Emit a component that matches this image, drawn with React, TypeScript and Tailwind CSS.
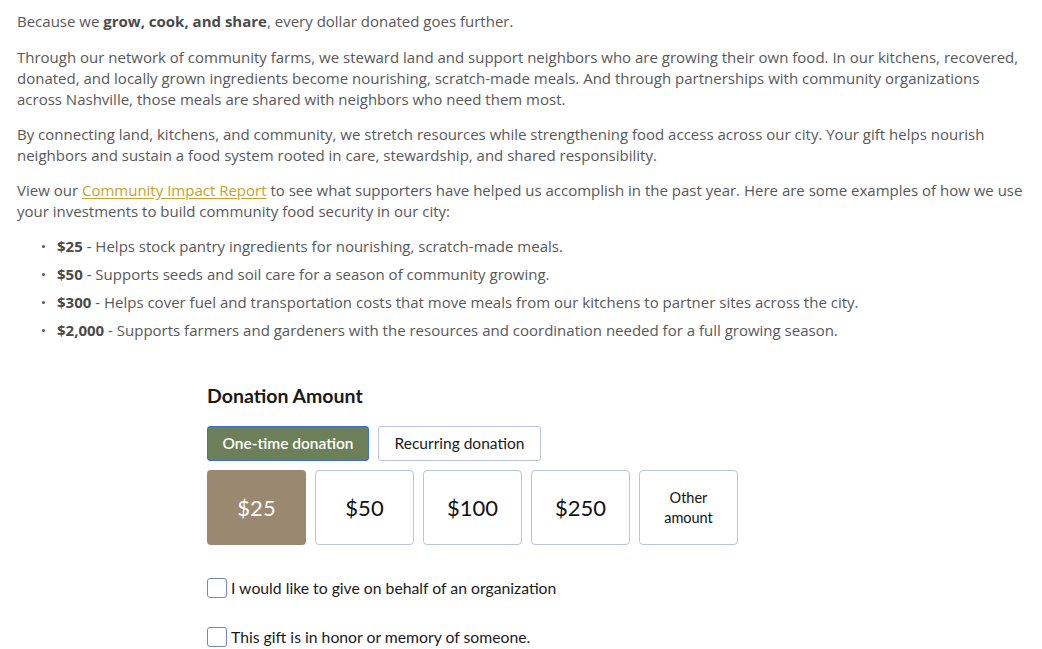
import { useState } from 'react';

const tiers = [
  { amount: '$25', text: 'Helps stock pantry ingredients for nourishing, scratch-made meals.' },
  { amount: '$50', text: 'Supports seeds and soil care for a season of community growing.' },
  { amount: '$300', text: 'Helps cover fuel and transportation costs that move meals from our kitchens to partner sites across the city.' },
  { amount: '$2,000', text: 'Supports farmers and gardeners with the resources and coordination needed for a full growing season.' },
];

const amounts = ['$25', '$50', '$100', '$250'];

export default function App() {
  const [frequency, setFrequency] = useState<'once' | 'recurring'>('once');
  const [amount, setAmount] = useState('$25');

  return (
    <div className="min-h-screen bg-white">
      {/* Intro copy */}
      <div className="px-[17px] pt-[11px] text-[15px] leading-[21px] text-[#585858] font-['Open_Sans',sans-serif]">
        <p>
          Because we <strong className="font-bold text-[#4a4a4a]">grow, cook, and share</strong>, every dollar donated goes further.
        </p>
        <p className="mt-[15px]">
          Through our network of community farms, we steward land and support neighbors who are growing their own food. In our kitchens, recovered, donated, and locally grown ingredients become nourishing, scratch-made meals. And through partnerships with community organizations across Nashville, those meals are shared with neighbors who need them most.
        </p>
        <p className="mt-[14px]">
          By connecting land, kitchens, and community, we stretch resources while strengthening food access across our city. Your gift helps nourish neighbors and sustain a food system rooted in care, stewardship, and shared responsibility.
        </p>
        <p className="mt-[14px]">
          View our{' '}
          <a href="#" className="text-[#c9a227] underline underline-offset-2">
            Community Impact Report
          </a>{' '}
          to see what supporters have helped us accomplish in the past year. Here are some examples of how we use your investments to build community food security in our city:
        </p>
        <ul className="mt-[14px] space-y-[7px] pl-[25px]">
          {tiers.map((t) => (
            <li key={t.amount} className="flex">
              <span className="mt-[9px] mr-[12px] h-[3px] w-[3px] shrink-0 rounded-full bg-[#585858]" />
              <span>
                <strong className="font-bold text-[#4a4a4a]">{t.amount}</strong> - {t.text}
              </span>
            </li>
          ))}
        </ul>
      </div>

      {/* Donation form */}
      <div className="mx-auto mt-[43px] w-[628px] font-['Lato',sans-serif] text-[#1a1a1a]">
        <h2 className="text-[19.5px] font-bold leading-[24px]">Donation Amount</h2>

        <div className="mt-[18px] flex gap-[9px]">
          <button
            onClick={() => setFrequency('once')}
            className={
              frequency === 'once'
                ? 'h-[35px] w-[162px] rounded-[3px] border border-[#3d6fd1] bg-[#6b8058] text-[15.5px] font-semibold text-white'
                : 'h-[35px] w-[162px] rounded-[3px] border border-[#b9c5d8] bg-white text-[15.5px] text-[#1a1a1a]'
            }
          >
            One-time donation
          </button>
          <button
            onClick={() => setFrequency('recurring')}
            className={
              frequency === 'recurring'
                ? 'h-[35px] w-[163px] rounded-[3px] border border-[#3d6fd1] bg-[#6b8058] text-[15.5px] font-semibold text-white'
                : 'h-[35px] w-[163px] rounded-[3px] border border-[#b9c5d8] bg-white text-[15.5px] text-[#1a1a1a]'
            }
          >
            Recurring donation
          </button>
        </div>

        <div className="mt-[9px] flex gap-[9px]">
          {amounts.map((a) => (
            <button
              key={a}
              onClick={() => setAmount(a)}
              className={
                amount === a
                  ? 'h-[75px] w-[99px] rounded-[4px] bg-[#9a8870] text-[22px] text-white'
                  : 'h-[75px] w-[99px] rounded-[4px] border border-[#b9c5d8] bg-white text-[22px] text-[#111]'
              }
            >
              {a}
            </button>
          ))}
          <button className="h-[75px] w-[99px] rounded-[4px] border border-[#b9c5d8] bg-white text-[14.5px] leading-[20px] text-[#111]">
            Other
            <br />
            amount
          </button>
        </div>

        <label className="mt-[33px] flex items-center gap-[4px] text-[15.75px] leading-[20px]">
          <span className="h-[20px] w-[20px] rounded-[3px] border border-[#7488b8] bg-white" />
          I would like to give on behalf of an organization
        </label>
        <label className="mt-[29px] flex items-center gap-[4px] text-[15.75px] leading-[20px]">
          <span className="h-[20px] w-[20px] rounded-[3px] border border-[#7488b8] bg-white" />
          This gift is in honor or memory of someone.
        </label>
      </div>
    </div>
  );
}
